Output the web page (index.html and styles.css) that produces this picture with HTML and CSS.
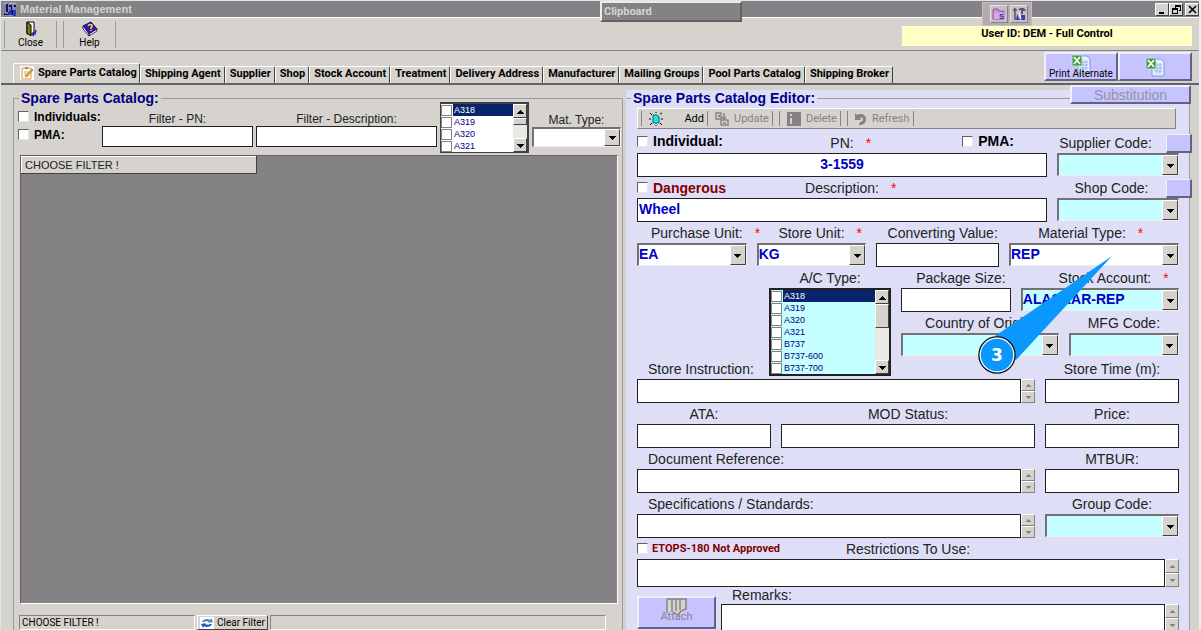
FILE: index.html
```html
<!DOCTYPE html>
<html lang="en">
<head>
    <meta charset="UTF-8">
    <meta name="viewport" content="width=device-width, initial-scale=1.0">
    <title>Material Management</title>
    <link rel="stylesheet" href="styles.css">
</head>
<body>

<header class="titlebar">
    <svg class="app-icon" width="14" height="14" viewBox="0 0 14 14">
        <rect width="14" height="14" fill="#8a8a94"/>
        <path d="M1 2h4v8h3v3H1z" fill="#10106b"/>
        <path d="M6 2h7v3h-2v8H8V5H6z" fill="#10106b"/>
        <path d="M2 1v10h3M6 2h7M10 3v5" stroke="#e8e8f0" fill="none"/>
        <path d="M5 13l2-7 2 7zM10 8h3v6h-3z" fill="#2a3ac8"/>
    </svg>
    <h1>Material Management</h1>
    <div class="window-buttons">
        <button type="button" aria-label="Minimize"><svg width="9" height="9" viewBox="0 0 9 9"><path d="M1 7h5v2H1z"/></svg></button>
        <button type="button" aria-label="Restore"><svg width="9" height="9" viewBox="0 0 9 9"><path d="M3 0h6v6H7V5h1V2H4v1H3zM0 3h6v6H0zM1 5v3h4V5z" fill-rule="evenodd"/></svg></button>
        <button type="button" aria-label="Close window"><svg width="9" height="9" viewBox="0 0 9 9"><path d="M1 1l7 7M8 1L1 8" stroke="#000" stroke-width="1.6"/></svg></button>
    </div>
</header>

<div class="clipboard">Clipboard</div>

<div class="quick-tools">
    <button type="button" aria-label="Folder">
        <svg width="14" height="14" viewBox="0 0 14 14"><path d="M1 12V3l1-1h4l1 2h5v8z" fill="#c795cf" stroke="#8a5a9c"/><path d="M2 6h11v6H2z" fill="#d9a8e0"/><text x="7" y="12" font-size="8" font-weight="bold" fill="#3a22a0" font-family="Liberation Sans, sans-serif">S</text></svg>
    </button>
    <button type="button" aria-label="Tools">
        <svg width="14" height="14" viewBox="0 0 14 14"><path d="M3 1v12M1 3h4" stroke="#55555f" stroke-width="1.5"/><path d="M6 3l2-2h4l2 3h-3v3H9V3z" fill="#5a5a6b"/><path d="M5 7l3 6H4zM9 8h4v5H9z" fill="#3c3ca8"/><path d="M7 5l2 7" stroke="#fff"/></svg>
    </button>
</div>

<div class="toolbar">
    <button type="button" class="tool">
        <svg width="16" height="16" viewBox="0 0 16 16"><path d="M4 1h7v12H4z" fill="#fff" stroke="#000"/><path d="M4 1l4 3v11l-4-3z" fill="#808000" stroke="#000"/><path d="M13 9l-1 4h-2m1-2l-2 2 2 2" fill="none" stroke="#2a2ab0" stroke-width="1.5"/></svg>
        Close
    </button>
    <button type="button" class="tool">
        <svg width="16" height="16" viewBox="0 0 16 16"><path d="M1 5l8-4 6 7-8 5z" fill="#3a16b8" stroke="#100850"/><path d="M1 5v3l6 7v-2zM7 13l8-5v2l-8 5z" fill="#fff" stroke="#100850" stroke-width=".8"/><path d="M6 5c1-2 4-2 4 0 0 1-1 1-1 3M9 9v1" stroke="#ffe020" stroke-width="1.6" fill="none"/></svg>
        Help
    </button>
    <div class="user-id">User ID: DEM - Full Control</div>
</div>

<div class="tab-row">
    <nav class="tabs">
        <a href="#" class="tab active">
            <svg width="14" height="14" viewBox="0 0 14 14"><path d="M0 0h14v14H0z" fill="#fff"/><path d="M2 2h9v11H2z" fill="#fff8e8" stroke="#e09a38"/><path d="M5 1h3v2H5z" fill="#8a8a8a"/><path d="M4 6h5M4 8h3" stroke="#b8b8b8"/><path d="M5 10l7-7 1 1-6 7z" fill="#f0b840" stroke="#805020" stroke-width=".6"/></svg>
            Spare Parts Catalog
        </a>
        <a href="#" class="tab">Shipping Agent</a>
        <a href="#" class="tab">Supplier</a>
        <a href="#" class="tab">Shop</a>
        <a href="#" class="tab">Stock Account</a>
        <a href="#" class="tab">Treatment</a>
        <a href="#" class="tab">Delivery Address</a>
        <a href="#" class="tab">Manufacturer</a>
        <a href="#" class="tab">Mailing Groups</a>
        <a href="#" class="tab">Pool Parts Catalog</a>
        <a href="#" class="tab">Shipping Broker</a>
    </nav>
    <div class="export-buttons">
        <button type="button" class="lilac">
            <svg width="20" height="20" viewBox="0 0 20 20"><path d="M7 2h9l3 3v14H7z" fill="#e4efff" stroke="#7fa0d8"/><path d="M9 8h8M9 11h8M9 14h8M12 6v11M15 6v11" stroke="#9bb8e8"/><path d="M1 1h10v11H1z" fill="#3c9a48" stroke="#c8e4c8"/><path d="M3 3l6 7M9 3l-6 7" stroke="#fff" stroke-width="1.8"/></svg>
            <span>Print Alternate</span>
        </button>
        <button type="button" class="lilac" aria-label="Export to Excel">
            <svg width="20" height="20" viewBox="0 0 20 20"><path d="M7 2h9l3 3v14H7z" fill="#e4efff" stroke="#7fa0d8"/><path d="M9 8h8M9 11h8M9 14h8M12 6v11M15 6v11" stroke="#9bb8e8"/><path d="M1 1h10v11H1z" fill="#3c9a48" stroke="#c8e4c8"/><path d="M3 3l6 7M9 3l-6 7" stroke="#fff" stroke-width="1.8"/></svg>
        </button>
    </div>
</div>

<main class="content">
    <section class="catalog">
        <fieldset>
            <legend>Spare Parts Catalog:</legend>
            <div class="filters">
                <div class="flags">
                    <label class="check"><input type="checkbox"> Individuals:</label>
                    <label class="check"><input type="checkbox"> PMA:</label>
                </div>
                <div class="filter">
                    <label for="filter-pn">Filter - PN:</label>
                    <input type="text" id="filter-pn">
                </div>
                <div class="filter">
                    <label for="filter-desc">Filter - Description:</label>
                    <input type="text" id="filter-desc">
                </div>
                <div class="check-list">
                    <ul>
                        <li class="selected"><label><input type="checkbox"><span>A318</span></label></li>
                        <li><label><input type="checkbox"><span>A319</span></label></li>
                        <li><label><input type="checkbox"><span>A320</span></label></li>
                        <li><label><input type="checkbox"><span>A321</span></label></li>
                    </ul>
                    <div class="scrollbar">
                        <button type="button" class="up" aria-label="Scroll up"></button>
                        <div class="thumb"></div>
                        <button type="button" class="down" aria-label="Scroll down"></button>
                    </div>
                </div>
                <div class="filter">
                    <label for="mat-type">Mat. Type:</label>
                    <div class="combo"><select id="mat-type"><option></option></select></div>
                </div>
            </div>
            <div class="grid">
                <table>
                    <thead><tr><th>CHOOSE FILTER !</th></tr></thead>
                </table>
            </div>
            <div class="status">
                <span class="status-text">CHOOSE FILTER !</span>
                <button type="button">
                    <svg width="14" height="12" viewBox="0 0 14 12"><path d="M0 0h14v12H0z" fill="#fff"/><path d="M2 5c1-3 6-4 8-2l1-2 2 4-5 1 1-1c-2-1-4-1-5 0z" fill="#3c8ad8"/><path d="M12 7c-1 3-6 4-8 2l-1 2-2-4 5-1-1 1c2 1 4 1 5 0z" fill="#1c5ab8"/></svg>
                    Clear Filter
                </button>
                <span class="status-rest"></span>
            </div>
        </fieldset>
    </section>

    <section class="editor">
        <button type="button" class="lilac substitution" disabled>Substitution</button>
        <fieldset>
            <legend>Spare Parts Catalog Editor:</legend>
            <div class="edit-bar">
                <button type="button" class="add">
                    <svg width="14" height="14" viewBox="0 0 14 14"><path d="M4 3h4l2 2v6H4z" fill="#20e0e8" stroke="#067"/><path d="M1 1l2 2M7 0v1M11 2l2-1M0 7h2M12 7h2M1 13l2-2M7 13v1M11 11l2 2" stroke="#000"/></svg>
                    Add
                </button>
                <button type="button" disabled>
                    <svg width="14" height="14" viewBox="0 0 14 14"><path d="M1 1h5v6H1z" fill="none" stroke="#848284" stroke-width="1.4"/><path d="M3 3h2v2H3z" fill="#848284"/><path d="M6 8h7v5H6z" fill="none" stroke="#848284" stroke-width="1.4"/><path d="M9 1v6M7 5l2 2 2-2M8 11h3" fill="none" stroke="#848284" stroke-width="1.4"/></svg>
                    Update
                </button>
                <button type="button" disabled>
                    <svg width="14" height="14" viewBox="0 0 14 14"><path d="M0 0h14v14H0z" fill="#848284"/><path d="M4 2v2M4 6v6" stroke="#d6d3ce" stroke-width="2"/></svg>
                    Delete
                </button>
                <button type="button" disabled>
                    <svg width="12" height="12" viewBox="0 0 12 12"><path d="M0 0l2 2c3-2 9-1 9 4 0 4-3 6-7 6l1-3c2 0 3-1 3-3 0-1-1-2-3-1l1 2H0z" fill="#848284"/></svg>
                    Refresh
                </button>
            </div>

            <div class="form">
                <div class="row row-pn">
                    <div class="field">
                        <div class="caption-flags">
                            <label class="check"><input type="checkbox"> Individual:</label>
                            <label for="pn">PN:<i>*</i></label>
                            <label class="check"><input type="checkbox"> PMA:</label>
                        </div>
                        <input type="text" id="pn" class="center" value="3-1559">
                    </div>
                    <div class="field">
                        <div class="caption-button">
                            <label for="supplier">Supplier Code:</label>
                            <button type="button" class="lilac" aria-label="Find supplier"></button>
                        </div>
                        <div class="combo cyan"><select id="supplier"><option></option></select></div>
                    </div>
                </div>

                <div class="row row-pn">
                    <div class="field">
                        <div class="caption-flags">
                            <label class="check danger"><input type="checkbox"> Dangerous</label>
                            <label for="description">Description:<i>*</i></label>
                        </div>
                        <input type="text" id="description" value="Wheel">
                    </div>
                    <div class="field">
                        <div class="caption-button shop">
                            <label for="shop">Shop Code:</label>
                            <button type="button" class="lilac" aria-label="Find shop"></button>
                        </div>
                        <div class="combo cyan"><select id="shop"><option></option></select></div>
                    </div>
                </div>

                <div class="row row-units">
                    <div class="field">
                        <label for="purchase-unit" class="shifted">Purchase Unit:<i>*</i></label>
                        <div class="combo"><select id="purchase-unit"><option>EA</option></select></div>
                    </div>
                    <div class="field">
                        <label for="store-unit">Store Unit:<i>*</i></label>
                        <div class="combo"><select id="store-unit"><option>KG</option></select></div>
                    </div>
                    <div class="field">
                        <label for="converting" class="shifted">Converting Value:</label>
                        <input type="text" id="converting">
                    </div>
                    <div class="field material">
                        <label for="material-type">Material Type:<i>*</i></label>
                        <div class="combo"><select id="material-type"><option>REP</option></select></div>
                    </div>
                </div>

                <div class="ac-block">
                    <div class="ac-type">
                        <span class="caption">A/C Type:</span>
                        <div class="check-list cyan">
                            <ul>
                                <li class="selected"><label><input type="checkbox"><span>A318</span></label></li>
                                <li><label><input type="checkbox"><span>A319</span></label></li>
                                <li><label><input type="checkbox"><span>A320</span></label></li>
                                <li><label><input type="checkbox"><span>A321</span></label></li>
                                <li><label><input type="checkbox"><span>B737</span></label></li>
                                <li><label><input type="checkbox"><span>B737-600</span></label></li>
                                <li><label><input type="checkbox"><span>B737-700</span></label></li>
                            </ul>
                            <div class="scrollbar">
                                <button type="button" class="up" aria-label="Scroll up"></button>
                                <div class="thumb"></div>
                                <button type="button" class="down" aria-label="Scroll down"></button>
                            </div>
                        </div>
                    </div>
                    <div class="ac-side">
                        <div class="row row-package">
                            <div class="field">
                                <label for="package" class="shifted">Package Size:</label>
                                <input type="text" id="package">
                            </div>
                            <div class="field">
                                <label for="stock-account" class="shifted">Stock Account:<i>*</i></label>
                                <div class="combo cyan"><select id="stock-account"><option>ALASKAR-REP</option></select></div>
                            </div>
                        </div>
                        <div class="row row-country">
                            <div class="field">
                                <label for="country">Country of Origin:</label>
                                <div class="combo cyan"><select id="country"><option></option></select></div>
                            </div>
                            <div class="field">
                                <label for="mfg">MFG Code:</label>
                                <div class="combo cyan"><select id="mfg"><option></option></select></div>
                            </div>
                        </div>
                    </div>
                </div>

                <div class="row row-memo">
                    <div class="field">
                        <label for="store-instruction" class="left">Store Instruction:</label>
                        <div class="memo">
                            <textarea id="store-instruction"></textarea>
                            <div class="memo-scroll"><button type="button" class="up" aria-label="Up"></button><button type="button" class="down" aria-label="Down"></button></div>
                        </div>
                    </div>
                    <div class="field">
                        <label for="store-time">Store Time (m):</label>
                        <input type="text" id="store-time">
                    </div>
                </div>

                <div class="row row-ata">
                    <div class="field">
                        <label for="ata">ATA:</label>
                        <input type="text" id="ata">
                    </div>
                    <div class="field">
                        <label for="mod">MOD Status:</label>
                        <input type="text" id="mod">
                    </div>
                    <div class="field">
                        <label for="price">Price:</label>
                        <input type="text" id="price">
                    </div>
                </div>

                <div class="row row-memo">
                    <div class="field">
                        <label for="doc-ref" class="left">Document Reference:</label>
                        <div class="memo">
                            <textarea id="doc-ref"></textarea>
                            <div class="memo-scroll"><button type="button" class="up" aria-label="Up"></button><button type="button" class="down" aria-label="Down"></button></div>
                        </div>
                    </div>
                    <div class="field">
                        <label for="mtbur">MTBUR:</label>
                        <input type="text" id="mtbur">
                    </div>
                </div>

                <div class="row row-memo">
                    <div class="field">
                        <label for="specs" class="left">Specifications / Standards:</label>
                        <div class="memo">
                            <textarea id="specs"></textarea>
                            <div class="memo-scroll"><button type="button" class="up" aria-label="Up"></button><button type="button" class="down" aria-label="Down"></button></div>
                        </div>
                    </div>
                    <div class="field">
                        <label for="group">Group Code:</label>
                        <div class="combo cyan"><select id="group"><option></option></select></div>
                    </div>
                </div>

                <div class="field restrictions">
                    <div class="caption-flags">
                        <label class="check danger small"><input type="checkbox"> ETOPS-180 Not Approved</label>
                        <label for="restrictions">Restrictions To Use:</label>
                    </div>
                    <div class="memo">
                        <textarea id="restrictions"></textarea>
                        <div class="memo-scroll"><button type="button" class="up" aria-label="Up"></button><button type="button" class="down" aria-label="Down"></button></div>
                    </div>
                </div>

                <div class="remarks">
                    <button type="button" class="lilac attach" disabled>
                        <svg width="22" height="18" viewBox="0 0 22 18"><path d="M1 1h19v11l-6 5-7-3H1z" fill="#d6d3ce"/><path d="M1 1h20M1 1v14M6 1v13M10 1v12M14 1v11M20 1v10l-5 2-3 4-5-3" fill="none" stroke="#848284" stroke-width="1.4"/></svg>
                        <span>Attach</span>
                    </button>
                    <div class="field">
                        <label for="remarks" class="left">Remarks:</label>
                        <div class="memo">
                            <textarea id="remarks"></textarea>
                            <div class="memo-scroll"><button type="button" class="up" aria-label="Up"></button><button type="button" class="down" aria-label="Down"></button></div>
                        </div>
                    </div>
                </div>
            </div>
        </fieldset>

        <!-- step marker pointing at the material type -->
        <svg class="callout" width="136" height="120" viewBox="0 0 136 120">
            <path d="M134 1L17 81L38 105z" fill="#0a98ff"/>
            <circle cx="19" cy="100" r="18" fill="#0a98ff" stroke="#111" stroke-width="1.5"/>
            <circle cx="19" cy="100" r="16.8" fill="none" stroke="#fff" stroke-width="1.2"/>
            <text x="19" y="106" text-anchor="middle" fill="#fff">3</text>
        </svg>
    </section>
</main>

</body>
</html>
```
FILE: styles.css
```css
:root {
    --face: #d6d3ce;
    --shade: #848284;
    --lilac: #c6c3ff;
    --lavender: #dedff7;
    --cyan: #c6ffff;
    --navy: #000084;
    --arrow-down: linear-gradient(#000, #000) center calc(50% - 1px) / 7px 1px no-repeat,
                  linear-gradient(#000, #000) center 50% / 5px 1px no-repeat,
                  linear-gradient(#000, #000) center calc(50% + 1px) / 3px 1px no-repeat,
                  linear-gradient(#000, #000) center calc(50% + 2px) / 1px 1px no-repeat;
    --arrow-up: linear-gradient(#000, #000) center calc(50% + 2px) / 7px 1px no-repeat,
                linear-gradient(#000, #000) center calc(50% + 1px) / 5px 1px no-repeat,
                linear-gradient(#000, #000) center 50% / 3px 1px no-repeat,
                linear-gradient(#000, #000) center calc(50% - 1px) / 1px 1px no-repeat;
    --dim-down: linear-gradient(#848284, #848284) center calc(50% - 1px) / 5px 1px no-repeat,
                linear-gradient(#848284, #848284) center 50% / 3px 1px no-repeat,
                linear-gradient(#848284, #848284) center calc(50% + 1px) / 1px 1px no-repeat;
    --dim-up: linear-gradient(#848284, #848284) center calc(50% + 1px) / 5px 1px no-repeat,
              linear-gradient(#848284, #848284) center 50% / 3px 1px no-repeat,
              linear-gradient(#848284, #848284) center calc(50% - 1px) / 1px 1px no-repeat;
}

* {
    box-sizing: border-box;
}

body {
    margin: 0;
    height: 100vh;
    display: flex;
    flex-direction: column;
    position: relative;
    overflow: hidden;
    background: var(--face);
    border: 1px solid #d6e7ef;
    border-right: 2px solid #e7effa;
    border-bottom: 0;
    font-family: "Liberation Sans", Arial, sans-serif;
    font-size: 14px;
    color: #000;
}

button, input, select, textarea {
    font: inherit;
    color: inherit;
    margin: 0;
    padding: 0;
    border-radius: 0;
}

button {
    background: var(--face);
    border: 1px solid;
    border-color: #fff #424142 #424142 #fff;
}

svg {
    flex-shrink: 0;
}

/* title bar */
.titlebar {
    display: flex;
    align-items: center;
    gap: 3px;
    height: 16px;
    padding-left: 2px;
    background: var(--shade);
    flex-shrink: 0;
}

.titlebar h1 {
    margin: 0;
    font-size: 11px;
    color: var(--face);
}

.window-buttons {
    display: flex;
    margin-left: auto;
}

.window-buttons button {
    display: flex;
    align-items: center;
    justify-content: center;
    width: 14px;
    height: 13px;
}

.window-buttons button:last-child {
    margin-left: 2px;
}

.clipboard {
    position: absolute;
    top: 0;
    left: 50%;
    width: 142px;
    height: 21px;
    padding: 2px;
    background: var(--shade);
    border: 2px solid;
    border-color: #efebe7 #636163 #636163 #efebe7;
    color: var(--face);
    font: bold 11px/13px Roboto, "Liberation Sans", sans-serif;
}

.quick-tools {
    position: absolute;
    top: 1px;
    right: 167px;
    display: flex;
    gap: 2px;
    padding: 2px 3px 2px 7px;
    background: #b5aaad;
    border: 1px solid #c6bebd;
}

.quick-tools button {
    display: flex;
    align-items: center;
    justify-content: center;
    width: 18px;
    height: 18px;
    background: #c6bec6;
    border-color: #e7dfe7 #848284 #848284 #e7dfe7;
}

/* main toolbar */
.toolbar {
    display: flex;
    height: 34px;
    padding: 3px 7px 2px 3px;
    border-top: 1px solid #fff;
    border-bottom: 1px solid var(--shade);
    font: 11px/12px Roboto, "Liberation Sans", sans-serif;
    flex-shrink: 0;
}

.tool {
    display: flex;
    flex-direction: column;
    align-items: center;
    justify-content: center;
    width: 53px;
    margin-right: 6px;
    border: solid #9c9a9c;
    border-width: 0 1px;
    font-size: 10px;
}

.user-id {
    width: 290px;
    height: 20px;
    margin: 5px 0 0 auto;
    background: #ffffc6;
    text-align: center;
    font-weight: bold;
    line-height: 16px;
}

/* tabs */
.tab-row {
    display: flex;
    justify-content: space-between;
    align-items: flex-end;
    height: 34px;
    padding: 0 7px 0 12px;
    border-bottom: 2px solid #636163;
    flex-shrink: 0;
}

.tabs {
    display: flex;
    align-items: flex-end;
    white-space: nowrap;
}

.tab {
    height: 17px;
    padding: 0 3px 0 4px;
    border-top: 1px solid #fff;
    border-left: 1px solid #fff;
    border-right: 1px solid #424142;
    border-radius: 2px 2px 0 0;
    font: bold 11px/14px Roboto, "Liberation Sans", sans-serif;
    color: #000;
    text-decoration: none;
}

.tab.active {
    display: flex;
    align-items: center;
    gap: 4px;
    height: 20px;
    padding: 0 2px 2px 6px;
}

.lilac {
    background: var(--lilac);
    border: 2px solid;
    border-color: #efefff #636184 #636184 #efefff;
}

.export-buttons {
    display: flex;
    height: 29px;
    margin-bottom: 2px;
}

.export-buttons button {
    display: flex;
    flex-direction: column;
    align-items: center;
    justify-content: center;
    width: 74px;
    overflow: hidden;
    font: 10px/12px Roboto, "Liberation Sans", sans-serif;
    white-space: nowrap;
}

.export-buttons span {
    margin-top: -6px;
}

/* two panes */
.content {
    display: grid;
    grid-template-columns: 610fr 564fr;
    grid-template-rows: minmax(0, 1fr);
    gap: 3px;
    flex: 1;
    min-height: 0;
    padding: 5px 9px 0 12px;
}

fieldset {
    min-width: 0;
    margin: 0;
    padding: 0;
    border: 1px solid #9c9a9c;
}

legend {
    margin-left: 1px;
    padding: 0 2px;
    font-weight: bold;
    line-height: 16px;
    color: var(--navy);
}

.catalog {
    display: flex;
    min-width: 0;
}

.catalog fieldset {
    display: flex;
    flex-direction: column;
    flex: 1;
    padding: 0 4px;
    border-bottom: 0;
}

.check {
    display: flex;
    align-items: center;
    gap: 5px;
    font-weight: bold;
    white-space: nowrap;
}

input[type="checkbox"] {
    appearance: none;
    width: 11px;
    height: 11px;
    background: #fff;
    border: 1px solid;
    border-color: #636163 #e7e7e7 #e7e7e7 #636163;
    flex-shrink: 0;
}

input[type="text"], textarea {
    display: block;
    width: 100%;
    min-width: 0;
    background: #fff;
    border: 1px solid #212021;
}

.filters {
    display: grid;
    grid-template-columns: 81px 151fr 181fr 89px 89px;
    column-gap: 3px;
    align-items: end;
    height: 51px;
    margin: -4px -3px 2px 0;
    font-size: 12px;
}

.flags {
    align-self: center;
    display: grid;
    gap: 4px;
    line-height: 14px;
    margin-bottom: 4px;
}

.filter {
    padding-bottom: 6px;
    text-align: center;
}

.filter > label {
    display: block;
    line-height: 14px;
    color: #212421;
}

.filter input {
    height: 21px;
}

.filter .combo {
    height: 20px;
}

/* drop-downs */
.combo {
    display: flex;
    height: 23px;
    background: #fff;
    border: 1px solid;
    border-color: #737173 #efefef #efefef #737173;
    border-width: 2px 1px 1px 2px;
}

.combo select {
    appearance: none;
    flex: 1;
    min-width: 0;
    border: 0;
    background: transparent;
    outline: 0;
}

.combo::after {
    content: "";
    width: 14px;
    background: var(--arrow-down), var(--face);
    border: 1px solid;
    border-color: #fff #424142 #424142 #fff;
}

.cyan {
    background: var(--cyan);
}

/* check lists */
.check-list {
    display: flex;
    background-color: #fff;
    border: 1px solid #424142;
    border-width: 2px 2px 1px 1px;
    font-size: 9px;
    line-height: 12px;
    color: var(--navy);
}

.check-list.cyan {
    background-color: var(--cyan);
}

.check-list ul {
    flex: 1;
    margin: 0;
    padding: 0;
    list-style: none;
}

.check-list label {
    display: flex;
    align-items: center;
    height: 12px;
}

.check-list span {
    flex: 1;
    padding-left: 1px;
}

.check-list input[type="checkbox"] {
    margin: 0 1px 0 0;
    border-color: #848284;
}

.selected span {
    background: #08246b;
    color: #fff;
}

.scrollbar {
    display: flex;
    flex-direction: column;
    width: 14px;
    background: #ebe9e6;
}

.scrollbar button {
    height: 14px;
    flex-shrink: 0;
}

.scrollbar .down {
    margin-top: auto;
}

.thumb {
    height: 7px;
    background: var(--face);
    border: 1px solid;
    border-color: #fff #424142 #424142 #fff;
}

.ac-type .thumb {
    height: 24px;
}

.up {
    background: var(--arrow-up), var(--face);
}

.down {
    background: var(--arrow-down), var(--face);
}

/* results grid */
.grid {
    flex: 1;
    margin: 0 0 0 2px;
    background: var(--shade);
    border: 1px solid;
    border-color: #636163 #fff #fff #636163;
}

.grid table {
    width: 236px;
    border-collapse: collapse;
}

.grid th {
    height: 17px;
    padding: 0 3px;
    background: var(--face);
    border: 1px solid;
    border-color: #fff #424142 #424142 #fff;
    color: #212421;
    font-size: 11px;
    font-weight: normal;
    line-height: 15px;
    text-align: left;
}

.status {
    display: flex;
    gap: 2px;
    height: 15px;
    margin: 11px 12px 0 1px;
    font: 10px/13px Roboto, "Liberation Sans", sans-serif;
}

.status-text, .status-rest {
    border: 1px solid;
    border-color: var(--shade) #fff #fff var(--shade);
}

.status-text {
    width: 176px;
    padding-left: 2px;
}

.status-rest {
    flex: 1;
}

.status button {
    display: flex;
    align-items: center;
    gap: 3px;
    width: 71px;
    padding-left: 2px;
    white-space: nowrap;
}

/* editor */
.editor {
    position: relative;
    min-width: 0;
    background: var(--lavender);
}

.editor fieldset {
    padding: 2px 10px 0;
    border-left-color: var(--lavender);
}

.editor legend {
    margin-left: -6px;
}

.substitution {
    position: absolute;
    top: -5px;
    right: -1px;
    width: 121px;
    height: 19px;
    line-height: 14px;
    color: #9492a5;
}

.edit-bar {
    display: flex;
    align-items: center;
    height: 21px;
    margin-right: 3px;
    padding-left: 3px;
    background: var(--face);
    border: 1px solid;
    border-color: #fff var(--shade) var(--shade) #fff;
    font: 11px/14px Roboto, "Liberation Sans", sans-serif;
}

.edit-bar button {
    display: flex;
    align-items: center;
    justify-content: space-between;
    height: 15px;
    margin-right: 6px;
    padding: 0 3px 0 7px;
    gap: 5px;
    border: solid var(--shade);
    border-width: 0 1px;
    color: #848284;
}

.edit-bar .add {
    width: 66px;
    margin-right: 0;
    border-right: 0;
    color: #000;
}

.form {
    padding-top: 3px;
}

.row {
    display: grid;
    column-gap: 10px;
}

.row-pn { grid-template-columns: 410fr 122fr; }
.row-units { grid-template-columns: 109fr 109fr 122fr 169fr; }
.row-package { grid-template-columns: 109fr 157fr; }
.row-country { grid-template-columns: 156fr 109fr; }
.row-memo { grid-template-columns: 398fr 134fr; }
.row-ata { grid-template-columns: 134fr 254fr 134fr; }

.field {
    min-width: 0;
}

.field > label, .caption {
    display: block;
    height: 21px;
    line-height: 22px;
    text-align: center;
    white-space: nowrap;
    color: #212421;
}

.field > label.left {
    padding-left: 11px;
    text-align: left;
}

.field > label.shifted {
    padding-left: 10px;
}

/* required mark takes no room, so the caption stays centred */
.field i {
    display: inline-block;
    width: 0;
    margin-left: 12px;
    margin-right: -12px;
    color: #f00;
    font-style: normal;
}

.field input[type="text"] {
    height: 24px;
    padding: 0 1px 3px;
    color: #0000c6;
    font-weight: bold;
}

.field .center {
    text-align: center;
}

.field select {
    color: #0000c6;
    font-weight: bold;
    padding-bottom: 2px;
}

.field .combo {
    margin-bottom: 1px;
}

.material > label {
    padding-right: 24px;
}

.caption-flags {
    display: grid;
    grid-template-columns: 1fr auto 1fr;
    align-items: center;
    height: 21px;
    line-height: 18px;
    color: #212421;
}

.caption-flags .check {
    padding-bottom: 4px;
    color: #000;
}

.caption-flags .check:last-child {
    justify-self: end;
    padding-right: 33px;
}

.caption-flags .danger {
    padding-bottom: 0;
    color: #840000;
}

.small {
    gap: 4px;
    font: bold 11px/18px Roboto, "Liberation Sans", sans-serif;
}

.caption-button {
    display: flex;
    height: 21px;
    margin-right: -13px;
    line-height: 22px;
    color: #212421;
}

.caption-button label {
    flex: 1;
    padding-right: 12px;
    text-align: center;
    white-space: nowrap;
}

.shop label {
    padding-right: 0;
}

.caption-button button {
    width: 26px;
    height: 19px;
    margin-top: 2px;
    border-width: 1px 2px 2px 1px;
}

/* the list runs down into the next row's caption */
.ac-block {
    display: grid;
    grid-template-columns: 122fr 278fr;
    column-gap: 10px;
    height: 91px;
    margin-left: 132px;
}

.ac-type {
    position: relative;
}

.ac-type .check-list {
    border-width: 2px;
    border-color: #212021;
}

.memo {
    display: flex;
    height: 24px;
}

.memo textarea {
    flex: 1;
    height: 100%;
    resize: none;
    overflow: hidden;
}

.memo-scroll {
    display: flex;
    flex-direction: column;
    width: 14px;
}

.memo-scroll button {
    flex: 1;
    border-color: #fff var(--shade) var(--shade) #fff;
}

.memo-scroll .up {
    background: var(--dim-up), var(--face);
}

.memo-scroll .down {
    background: var(--dim-down), var(--face);
}

.restrictions .memo {
    height: 28px;
}

.remarks {
    display: grid;
    grid-template-columns: 79px 1fr;
    column-gap: 5px;
}

.remarks .field > label {
    height: 17px;
    line-height: 16px;
}

.remarks .memo {
    height: 28px;
}

.attach {
    display: flex;
    flex-direction: column;
    align-items: center;
    height: 33px;
    margin-top: 9px;
    font: 11px/12px Roboto, "Liberation Sans", sans-serif;
    color: #848294;
}

.attach span {
    margin-top: -5px;
}

.callout {
    position: absolute;
    top: 165px;
    right: 76px;
    pointer-events: none;
}

.callout text {
    font: bold 17px "DejaVu Sans", sans-serif;
}
```
